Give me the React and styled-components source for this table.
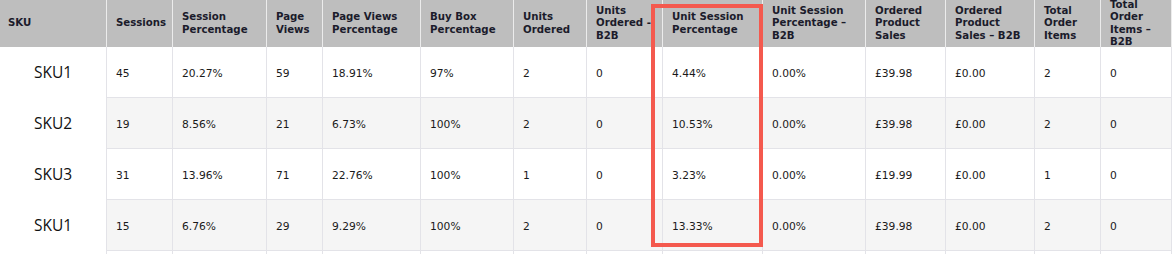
import React from "react";
import styled, { createGlobalStyle } from "styled-components";

const Global = createGlobalStyle`
  html, body { margin: 0; padding: 0; background: #ffffff; }
  body { font-family: "DejaVu Sans", Verdana, sans-serif; }
`;

const COLS = [107, 66, 94, 56, 98, 93, 73, 76, 100, 103, 80, 89, 66, 71];
const TEMPLATE = COLS.map((w) => `${w}px`).join(" ");

const headers = [
  ["SKU"],
  ["Sessions"],
  ["Session", "Percentage"],
  ["Page", "Views"],
  ["Page Views", "Percentage"],
  ["Buy Box", "Percentage"],
  ["Units", "Ordered"],
  ["Units", "Ordered -", "B2B"],
  ["Unit Session", "Percentage"],
  ["Unit Session", "Percentage –", "B2B"],
  ["Ordered", "Product", "Sales"],
  ["Ordered", "Product", "Sales – B2B"],
  ["Total", "Order", "Items"],
  ["Total", "Order", "Items –", "B2B"],
];

const rows = [
  ["SKU1", "45", "20.27%", "59", "18.91%", "97%", "2", "0", "4.44%", "0.00%", "£39.98", "£0.00", "2", "0"],
  ["SKU2", "19", "8.56%", "21", "6.73%", "100%", "2", "0", "10.53%", "0.00%", "£39.98", "£0.00", "2", "0"],
  ["SKU3", "31", "13.96%", "71", "22.76%", "100%", "1", "0", "3.23%", "0.00%", "£19.99", "£0.00", "1", "0"],
  ["SKU1", "15", "6.76%", "29", "9.29%", "100%", "2", "0", "13.33%", "0.00%", "£39.98", "£0.00", "2", "0"],
  ["", "", "", "", "", "", "", "", "", "", "", "", "", ""],
];

const Page = styled.div`
  position: relative;
  width: 1172px;
  height: 254px;
  overflow: hidden;
  background: #ffffff;
`;

const Grid = styled.div`
  display: flex;
  flex-direction: column;
`;

const Row = styled.div`
  display: grid;
  grid-template-columns: ${TEMPLATE};
  height: ${(p) => p.$h}px;
`;

const HeadCell = styled.div`
  box-sizing: border-box;
  background: #bebebe;
  border-right: 1px solid #ececec;
  padding: 0 4px 0 ${(p) => (p.$first ? 8 : 9)}px;
  display: flex;
  flex-direction: column;
  justify-content: center;
  overflow: hidden;
  color: #1b1b2b;
  font-family: "DejaVu Sans", Verdana, sans-serif;
  font-weight: bold;
  font-size: 10.2px;
  line-height: 12.4px;
  white-space: nowrap;
`;

const Cell = styled.div`
  box-sizing: border-box;
  background: ${(p) => (p.$alt ? "#f5f5f5" : "#ffffff")};
  border-right: 1px solid #e3e3e8;
  border-bottom: 1px solid #e3e3e8;
  padding: 2px 4px 0 9px;
  display: flex;
  align-items: center;
  color: #1a1a1a;
  font-family: "DejaVu Sans", Verdana, sans-serif;
  font-size: 10.7px;
  white-space: nowrap;
`;

const SkuCell = styled.div`
  box-sizing: border-box;
  background: #ffffff;
  border-right: 1px solid #e3e3e8;
  display: flex;
  align-items: center;
  justify-content: center;
  padding-bottom: 2px;
  color: #111111;
  font-family: "Open Sans", "Noto Sans", sans-serif;
  font-size: 15.5px;
`;

const Highlight = styled.div`
  position: absolute;
  left: 651px;
  top: 4px;
  width: 112px;
  height: 243px;
  box-sizing: border-box;
  border: 4px solid #f4594e;
  pointer-events: none;
`;

export default function App() {
  return (
    <Page>
      <Global />
      <Grid>
        <Row $h={47}>
          {headers.map((lines, i) => (
            <HeadCell key={i} $first={i === 0}>
              {lines.map((l, j) => (
                <span key={j}>{l}</span>
              ))}
            </HeadCell>
          ))}
        </Row>
        {rows.map((r, ri) => (
          <Row key={ri} $h={51}>
            {r.map((v, ci) =>
              ci === 0 ? (
                <SkuCell key={ci}>{v}</SkuCell>
              ) : (
                <Cell key={ci} $alt={ri % 2 === 1}>
                  {v}
                </Cell>
              )
            )}
          </Row>
        ))}
      </Grid>
      <Highlight />
    </Page>
  );
}
